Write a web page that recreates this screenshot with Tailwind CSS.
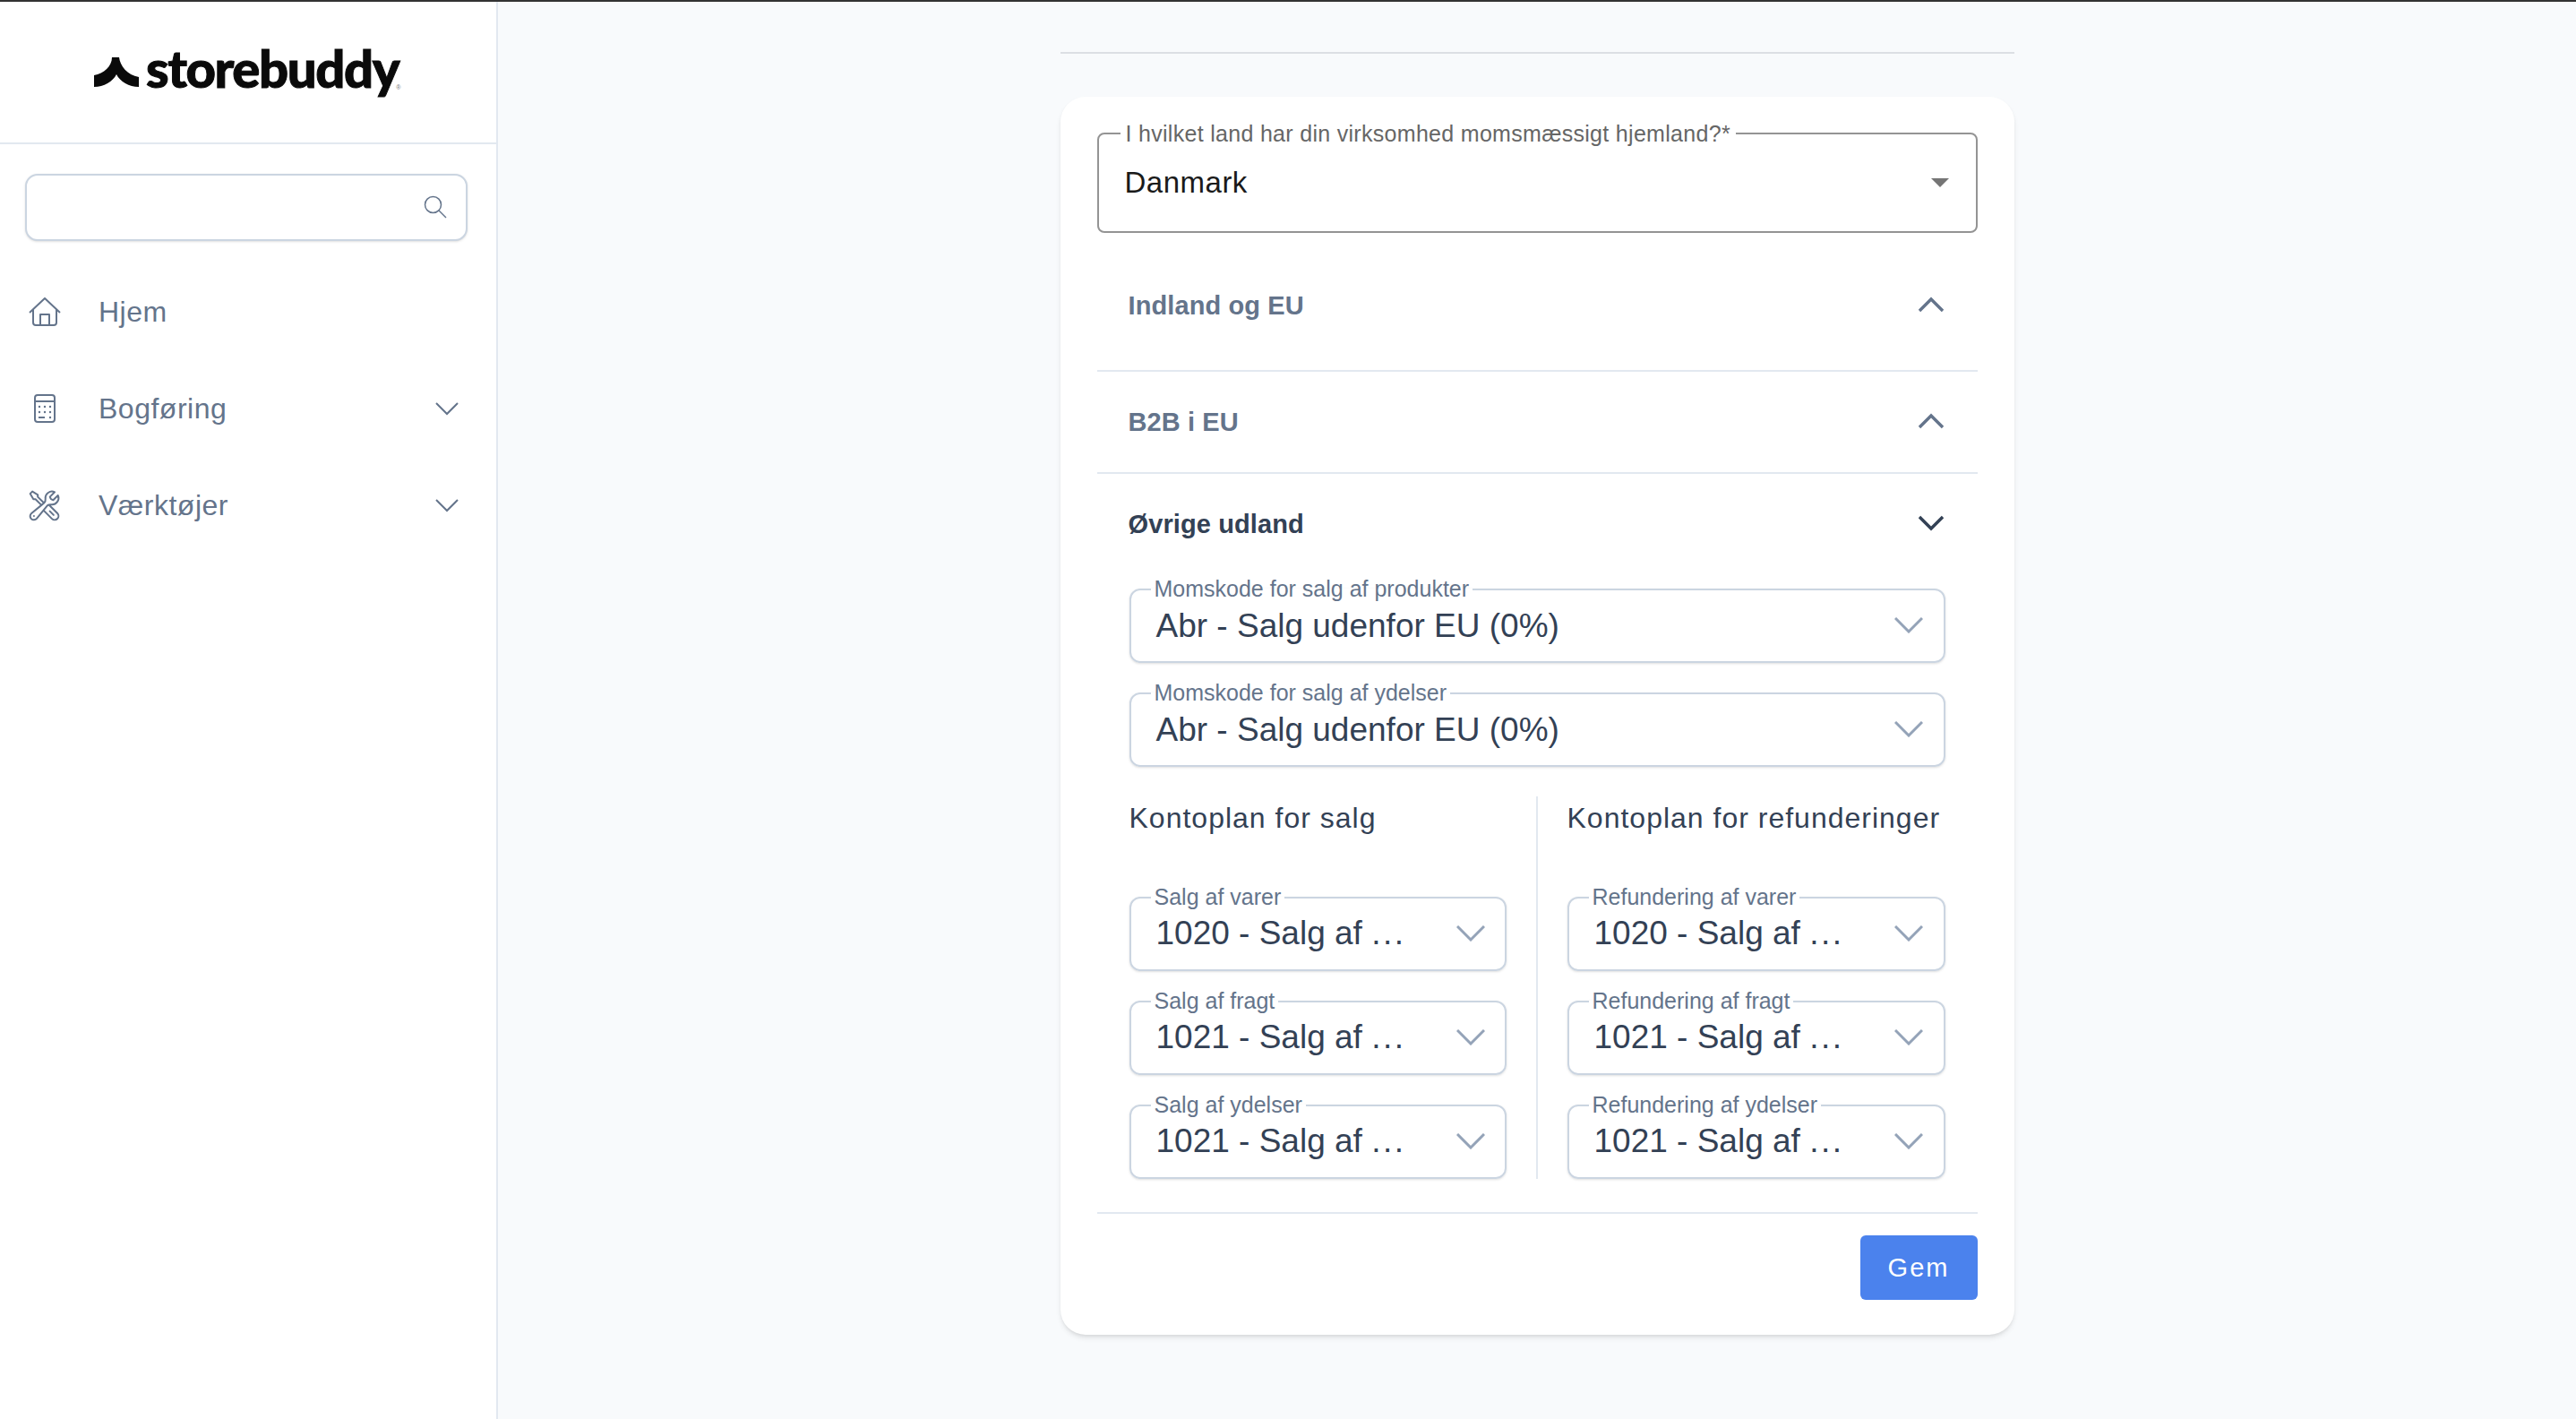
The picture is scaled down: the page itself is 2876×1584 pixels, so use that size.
<!DOCTYPE html>
<html lang="en">
<head>
    <meta charset="UTF-8">
    <title>Storebuddy</title>
    <script src="https://cdn.jsdelivr.net/npm/@tailwindcss/browser@4"></script>
</head>
<body class="bg-[#f8fafc] font-['Liberation_Sans',sans-serif] h-[1584px] overflow-hidden">
    <div class="h-[2px] bg-[#333]"></div>
    <div class="flex h-[1582px]">
        <!-- Sidebar -->
        <aside class="w-[556px] shrink-0 bg-white border-r-[2px] border-[#e2e8f0]">
            <div class="h-[159px] border-b-[2px] border-[#e2e8f0] flex items-end pl-[105px] pb-[60px]">
                <svg class="w-[50px] h-[33px] shrink-0 mb-[2px]" viewBox="0 0 50 33" fill="#0a0a0a"><path d="M20 0h8c1 9 9 20 22 22v11C39 33 29 27 25 19 21 27 11 33 0 33V20C11 18 20 10 20 0z"/></svg>
                <span class="ml-[8px] mb-[6px] font-['Lato',sans-serif] text-[58px] leading-[58px] h-[46px] font-black tracking-[-1.4px] text-[#0a0a0a] [-webkit-text-stroke:1px_#0a0a0a]">storebuddy</span>
                <span class="text-[7px] leading-none mb-[-2px] text-[#777] ml-[-3px]">®</span>
            </div>
            <div class="pl-[28px] pr-[32px] pt-[33px]">
                <div class="h-[75px] bg-white border-[2px] border-[#cbd5e1] rounded-[14px] shadow-sm flex items-center justify-end pr-[21px] pb-[2px]">
                    <svg class="w-[26px] h-[26px]" viewBox="0 0 26 26" fill="none" stroke="#64748b" stroke-width="1.5"><circle cx="10.5" cy="10.5" r="9"/><path d="M17 17l8 8"/></svg>
                </div>
            </div>
            <nav class="mt-[47px] text-[#64748b] text-[32px] tracking-[0.5px]">
                <a class="flex items-center h-[64px] pl-[32px] pr-[42px]">
                    <svg class="w-[36px] h-[32px] shrink-0" viewBox="0 0 36 32" fill="none" stroke="#64748b" stroke-width="2" stroke-linejoin="round"><path d="M1 17L18 1l17 16M5 13v15a3 3 0 003 3h20a3 3 0 003-3V13M13 31V19h10v12"/></svg>
                    <span class="ml-[42px]">Hjem</span>
                </a>
                <a class="flex items-center h-[64px] mt-[44px] pl-[38px] pr-[42px]">
                    <svg class="w-[24px] h-[32px] shrink-0" viewBox="0 0 24 32" fill="none" stroke="#64748b" stroke-width="2"><rect x="1" y="1" width="22" height="30" rx="3"/><path d="M1 8h22"/><path stroke-linecap="round" stroke-width="2.4" d="M6 14h.01M12 14h.01M18 14h.01M6 20h.01M12 20h.01M18 20h.01M18 26h.01"/><path d="M5 26h7"/></svg>
                    <span class="ml-[48px] flex-1">Bogføring</span>
                    <svg class="w-[26px] h-[16px]" viewBox="0 0 26 16" fill="none" stroke="#64748b" stroke-width="2"><path d="M1 2l12 12L25 2"/></svg>
                </a>
                <a class="flex items-center h-[64px] mt-[44px] pl-[30px] pr-[42px]">
                    <svg class="w-[39px] h-[39px] shrink-0" viewBox="0 0 24 24" fill="none" stroke="#64748b" stroke-width="1.25" stroke-linecap="round" stroke-linejoin="round"><path d="M11.42 15.17 17.25 21A2.652 2.652 0 0 0 21 17.25l-5.877-5.877M11.42 15.17l2.496-3.03c.317-.384.74-.626 1.208-.766M11.42 15.17l-4.655 5.653a2.548 2.548 0 1 1-3.586-3.586l6.837-5.63m5.108-.233c.55-.164 1.163-.188 1.743-.14a4.5 4.5 0 0 0 4.486-6.336l-3.276 3.277a3.004 3.004 0 0 1-2.25-2.25l3.276-3.276a4.5 4.5 0 0 0-6.336 4.486c.091 1.076-.071 2.264-.904 2.95l-.102.085m-1.745 1.437L5.909 7.5H4.5L2.25 3.75l1.5-1.5L7.5 4.5v1.409l4.26 4.26m-1.745 1.437 1.745-1.437m6.615 8.206L15.75 15.75M4.867 19.125h.008v.008h-.008v-.008v-.008Z"/></svg>
                    <span class="ml-[41px] flex-1">Værktøjer</span>
                    <svg class="w-[26px] h-[16px]" viewBox="0 0 26 16" fill="none" stroke="#64748b" stroke-width="2"><path d="M1 2l12 12L25 2"/></svg>
                </a>
            </nav>
        </aside>

        <!-- Main -->
        <main class="flex-1 flex flex-col items-center">
            <div class="w-[1065px] mt-[56px] border-t-[2px] border-[#dcdfe4]"></div>
            <div class="w-[1065px] h-[1382px] mt-[48px] bg-white rounded-[28px] shadow-md px-[41px] pt-[26px]">
                <fieldset class="h-[126px] border-[2px] border-[#949494] rounded-[8px] pl-[24px] pr-[30px]">
                    <legend class="px-[6px] text-[25px] leading-[30px] text-[#666] tracking-[0.3px]">I hvilket land har din virksomhed momsmæssigt hjemland?*</legend>
                    <div class="flex items-center justify-between h-[80px] pl-[5px]">
                        <span class="text-[33px] text-[#1a1a1a] tracking-[0.5px]">Danmark</span>
                        <span class="w-0 h-0 border-l-[10px] border-r-[10px] border-t-[10px] border-l-transparent border-r-transparent border-t-[#757575]"></span>
                    </div>
                </fieldset>

                <div class="h-[64px] mt-[48px] mb-[41px] pl-[35px] pr-[38px] flex items-center justify-between text-[#64748b] text-[29px] font-bold tracking-[0.1px]">
                    <span class="pt-[3px]">Indland og EU</span>
                    <svg class="w-[28px] h-[18px]" viewBox="0 0 28 18" fill="none" stroke="#64748b" stroke-width="3.4"><path d="M1 16L14 3l13 13"/></svg>
                </div>
                <div class="border-t-[2px] border-[#e2e8f0] h-[114px] pt-[23px]">
                    <div class="h-[64px] pl-[35px] pr-[38px] flex items-center justify-between text-[#64748b] text-[29px] font-bold tracking-[0.1px]">
                        <span class="pt-[3px]">B2B i EU</span>
                        <svg class="w-[28px] h-[18px]" viewBox="0 0 28 18" fill="none" stroke="#64748b" stroke-width="3.4"><path d="M1 16L14 3l13 13"/></svg>
                    </div>
                </div>
                <div class="border-t-[2px] border-[#e2e8f0] pt-[23px] h-[826px]">
                    <div class="h-[64px] pl-[35px] pr-[38px] flex items-center justify-between text-[#334155] text-[29px] font-bold tracking-[0.1px]">
                        <span class="pt-[3px]">Øvrige udland</span>
                        <svg class="w-[28px] h-[18px]" viewBox="0 0 28 18" fill="none" stroke="#334155" stroke-width="3.4"><path d="M1 2l13 13L27 2"/></svg>
                    </div>
                    <div class="px-[36px] mt-[28px]">
                        <fieldset class="h-[96px] border-[2px] border-[#cbd5e1] rounded-[12px] shadow-sm pl-[22px] pr-[23px]">
                            <legend class="px-[4px] text-[25px] leading-[26px] pb-[2px] text-[#64748b]">Momskode for salg af produkter</legend>
                            <div class="flex items-center justify-between h-[66px] mt-[-8px] pl-[6px]">
                                <span class="pt-[4px] text-[37px] text-[#334155]">Abr - Salg udenfor EU (0%)</span>
                                <svg class="w-[32px] h-[18px] mt-[2px]" viewBox="0 0 32 18" fill="none" stroke="#94a3b8" stroke-width="3"><path d="M1 1l15 15L31 1"/></svg>
                            </div>
                        </fieldset>
                        <fieldset class="h-[96px] mt-[20px] border-[2px] border-[#cbd5e1] rounded-[12px] shadow-sm pl-[22px] pr-[23px]">
                            <legend class="px-[4px] text-[25px] leading-[26px] pb-[2px] text-[#64748b]">Momskode for salg af ydelser</legend>
                            <div class="flex items-center justify-between h-[66px] mt-[-8px] pl-[6px]">
                                <span class="pt-[4px] text-[37px] text-[#334155]">Abr - Salg udenfor EU (0%)</span>
                                <svg class="w-[32px] h-[18px] mt-[2px]" viewBox="0 0 32 18" fill="none" stroke="#94a3b8" stroke-width="3"><path d="M1 1l15 15L31 1"/></svg>
                            </div>
                        </fieldset>

                        <div class="flex mt-[33px]">
                            <div class="w-[456px] shrink-0 pr-[33px] border-r-[2px] border-[#e2e8f0]">
                                <div class="h-[50px] text-[32px] leading-[49px] text-[#334155] tracking-[1px]">Kontoplan for salg</div>
                                <fieldset class="h-[96px] mt-[49px] border-[2px] border-[#cbd5e1] rounded-[12px] shadow-sm pl-[22px] pr-[22px]">
                                    <legend class="px-[4px] text-[25px] leading-[26px] pb-[2px] text-[#64748b]">Salg af varer</legend>
                                    <div class="flex items-center justify-between h-[66px] mt-[-8px] pl-[6px]">
                                        <span class="pt-[2px] text-[37px] text-[#334155]">1020 - Salg af <span class="tracking-[2.5px]">...</span></span>
                                        <svg class="w-[32px] h-[18px] mt-[2px]" viewBox="0 0 32 18" fill="none" stroke="#94a3b8" stroke-width="3"><path d="M1 1l15 15L31 1"/></svg>
                                    </div>
                                </fieldset>
                                <fieldset class="h-[96px] mt-[20px] border-[2px] border-[#cbd5e1] rounded-[12px] shadow-sm pl-[22px] pr-[22px]">
                                    <legend class="px-[4px] text-[25px] leading-[26px] pb-[2px] text-[#64748b]">Salg af fragt</legend>
                                    <div class="flex items-center justify-between h-[66px] mt-[-8px] pl-[6px]">
                                        <span class="pt-[2px] text-[37px] text-[#334155]">1021 - Salg af <span class="tracking-[2.5px]">...</span></span>
                                        <svg class="w-[32px] h-[18px] mt-[2px]" viewBox="0 0 32 18" fill="none" stroke="#94a3b8" stroke-width="3"><path d="M1 1l15 15L31 1"/></svg>
                                    </div>
                                </fieldset>
                                <fieldset class="h-[96px] mt-[20px] border-[2px] border-[#cbd5e1] rounded-[12px] shadow-sm pl-[22px] pr-[22px]">
                                    <legend class="px-[4px] text-[25px] leading-[26px] pb-[2px] text-[#64748b]">Salg af ydelser</legend>
                                    <div class="flex items-center justify-between h-[66px] mt-[-8px] pl-[6px]">
                                        <span class="pt-[2px] text-[37px] text-[#334155]">1021 - Salg af <span class="tracking-[2.5px]">...</span></span>
                                        <svg class="w-[32px] h-[18px] mt-[2px]" viewBox="0 0 32 18" fill="none" stroke="#94a3b8" stroke-width="3"><path d="M1 1l15 15L31 1"/></svg>
                                    </div>
                                </fieldset>
                            </div>
                            <div class="flex-1 min-w-0 pl-[33px]">
                                <div class="h-[50px] text-[32px] leading-[49px] text-[#334155] tracking-[1px] whitespace-nowrap">Kontoplan for refunderinger</div>
                                <fieldset class="h-[96px] mt-[49px] border-[2px] border-[#cbd5e1] rounded-[12px] shadow-sm pl-[22px] pr-[23px]">
                                    <legend class="px-[4px] text-[25px] leading-[26px] pb-[2px] text-[#64748b]">Refundering af varer</legend>
                                    <div class="flex items-center justify-between h-[66px] mt-[-8px] pl-[6px]">
                                        <span class="pt-[2px] text-[37px] text-[#334155]">1020 - Salg af <span class="tracking-[2.5px]">...</span></span>
                                        <svg class="w-[32px] h-[18px] mt-[2px]" viewBox="0 0 32 18" fill="none" stroke="#94a3b8" stroke-width="3"><path d="M1 1l15 15L31 1"/></svg>
                                    </div>
                                </fieldset>
                                <fieldset class="h-[96px] mt-[20px] border-[2px] border-[#cbd5e1] rounded-[12px] shadow-sm pl-[22px] pr-[23px]">
                                    <legend class="px-[4px] text-[25px] leading-[26px] pb-[2px] text-[#64748b]">Refundering af fragt</legend>
                                    <div class="flex items-center justify-between h-[66px] mt-[-8px] pl-[6px]">
                                        <span class="pt-[2px] text-[37px] text-[#334155]">1021 - Salg af <span class="tracking-[2.5px]">...</span></span>
                                        <svg class="w-[32px] h-[18px] mt-[2px]" viewBox="0 0 32 18" fill="none" stroke="#94a3b8" stroke-width="3"><path d="M1 1l15 15L31 1"/></svg>
                                    </div>
                                </fieldset>
                                <fieldset class="h-[96px] mt-[20px] border-[2px] border-[#cbd5e1] rounded-[12px] shadow-sm pl-[22px] pr-[23px]">
                                    <legend class="px-[4px] text-[25px] leading-[26px] pb-[2px] text-[#64748b]">Refundering af ydelser</legend>
                                    <div class="flex items-center justify-between h-[66px] mt-[-8px] pl-[6px]">
                                        <span class="pt-[2px] text-[37px] text-[#334155]">1021 - Salg af <span class="tracking-[2.5px]">...</span></span>
                                        <svg class="w-[32px] h-[18px] mt-[2px]" viewBox="0 0 32 18" fill="none" stroke="#94a3b8" stroke-width="3"><path d="M1 1l15 15L31 1"/></svg>
                                    </div>
                                </fieldset>
                            </div>
                        </div>
                    </div>
                </div>
                <div class="border-t-[2px] border-[#e2e8f0] pt-[24px] flex justify-end">
                    <button class="w-[131px] h-[72px] bg-[#4b82ed] rounded-[6px] text-white text-[29px] tracking-[2px] pt-[1px]">Gem</button>
                </div>
            </div>
        </main>
    </div>
</body>
</html>
